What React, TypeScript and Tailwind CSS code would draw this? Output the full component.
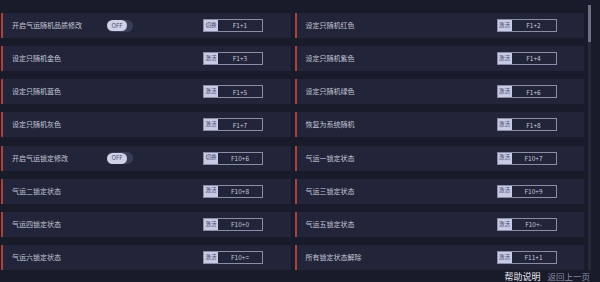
import React from "react";

interface Row {
  label: string;
  action: string;
  hotkey: string;
  toggle?: boolean;
}

const leftRows: Row[] = [
  { label: "开启气运随机品质修改", action: "切换", hotkey: "F1+1", toggle: true },
  { label: "设定只随机金色", action: "激活", hotkey: "F1+3" },
  { label: "设定只随机蓝色", action: "激活", hotkey: "F1+5" },
  { label: "设定只随机灰色", action: "激活", hotkey: "F1+7" },
  { label: "开启气运锁定修改", action: "切换", hotkey: "F10+6", toggle: true },
  { label: "气运二锁定状态", action: "激活", hotkey: "F10+8" },
  { label: "气运四锁定状态", action: "激活", hotkey: "F10+0" },
  { label: "气运六锁定状态", action: "激活", hotkey: "F10+=" },
];

const rightRows: Row[] = [
  { label: "设定只随机红色", action: "激活", hotkey: "F1+2" },
  { label: "设定只随机紫色", action: "激活", hotkey: "F1+4" },
  { label: "设定只随机绿色", action: "激活", hotkey: "F1+6" },
  { label: "恢复为系统随机", action: "激活", hotkey: "F1+8" },
  { label: "气运一锁定状态", action: "激活", hotkey: "F10+7" },
  { label: "气运三锁定状态", action: "激活", hotkey: "F10+9" },
  { label: "气运五锁定状态", action: "激活", hotkey: "F10+-" },
  { label: "所有锁定状态解除", action: "激活", hotkey: "F11+1" },
];

function Toggle() {
  return (
    <div className="flex h-[12px] w-[26px] items-center rounded-full bg-[#3a3d56]">
      <div className="flex h-[11px] w-[20px] items-center justify-center rounded-full bg-[#cfd2e6] text-[6px] leading-none text-[#4b4e6b]">
        OFF
      </div>
    </div>
  );
}

function HotkeyBox({ action, hotkey }: { action: string; hotkey: string }) {
  return (
    <div className="flex h-[13px] w-[60px] border border-[#8a8da4]">
      <span className="flex w-[14px] items-center justify-center bg-[#c8cbe6] text-[5.5px] leading-none text-[#3d4060]">
        {action}
      </span>
      <span className="flex flex-1 items-center justify-center text-[6.5px] leading-none text-[#c3c6d8]">
        {hotkey}
      </span>
    </div>
  );
}

function Card({ row }: { row: Row }) {
  return (
    <div className="flex h-[25px] items-center border-l-2 border-[#a8423b] bg-[#222539]">
      <span className="w-[104px] shrink-0 pl-[9px] text-[7px] leading-none text-[#c4c6d8]">
        {row.label}
      </span>
      <div className="w-[96px] shrink-0">{row.toggle && <Toggle />}</div>
      <HotkeyBox action={row.action} hotkey={row.hotkey} />
    </div>
  );
}

export default function App() {
  return (
    <div
      className="relative h-[282px] w-[600px] overflow-hidden bg-[#191b2b]"
      style={{ fontFamily: '"Noto Sans CJK SC", "Noto Sans", sans-serif' }}
    >
      <div className="flex">
        <div className="grid w-[584px] grid-cols-2 gap-x-[4px] gap-y-[8px] pl-[1px] pt-[13px]">
          {leftRows.map((l, i) => (
            <React.Fragment key={i}>
              <Card row={l} />
              <Card row={rightRows[i]} />
            </React.Fragment>
          ))}
        </div>
        <div className="ml-[4px] mt-[5px] h-[265px] w-[3px] bg-[#262939]">
          <div className="h-[37px] w-full bg-[#6c6f86]" />
        </div>
      </div>
      <div className="flex items-baseline justify-end gap-[7px] pr-[10px] pt-[1px] leading-[11px]">
        <span className="text-[9px] text-[#e6e7f0]">帮助说明</span>
        <span className="text-[8.5px] text-[#8a8da2]">返回上一页</span>
      </div>
    </div>
  );
}
